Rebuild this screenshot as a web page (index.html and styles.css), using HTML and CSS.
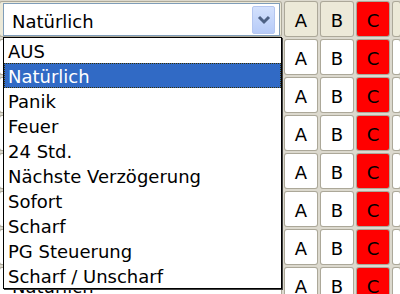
FILE: index.html
```html
<!DOCTYPE html>
<html>
<head>
<meta charset="UTF-8">
<title>Alarmzonen</title>
<link rel="stylesheet" href="styles.css">
</head>
<body>

<div class="grid">
	<div class="cell head name">
		<div class="combo">
			<span class="combo-text">Natürlich</span>
			<span class="combo-btn">
				<svg width="14" height="10" viewBox="0 0 14 10"><polyline points="2,2 7,7 12,2" fill="none" stroke="#4d6185" stroke-width="3"/></svg>
			</span>
		</div>
	</div>
	<div class="cell head">A</div>
	<div class="cell head">B</div>
	<div class="cell red">C</div>
	<div class="cell head"></div>

	<!-- first column of these rows is covered by the open list -->
	<div class="cell name"></div><div class="cell">A</div><div class="cell">B</div><div class="cell red">C</div><div class="cell"></div>
	<div class="cell name"></div><div class="cell">A</div><div class="cell">B</div><div class="cell red">C</div><div class="cell"></div>
	<div class="cell name"></div><div class="cell">A</div><div class="cell">B</div><div class="cell red">C</div><div class="cell"></div>
	<div class="cell name"></div><div class="cell">A</div><div class="cell">B</div><div class="cell red">C</div><div class="cell"></div>
	<div class="cell name"></div><div class="cell">A</div><div class="cell">B</div><div class="cell red">C</div><div class="cell"></div>
	<div class="cell name"></div><div class="cell">A</div><div class="cell">B</div><div class="cell red">C</div><div class="cell"></div>
	<div class="cell name">Natürlich</div><div class="cell">A</div><div class="cell">B</div><div class="cell red">C</div><div class="cell"></div>
</div><!-- grid -->

<ul class="dropdown">
	<li>AUS</li>
	<li class="selected">Natürlich</li>
	<li>Panik</li>
	<li>Feuer</li>
	<li>24 Std.</li>
	<li>Nächste Verzögerung</li>
	<li>Sofort</li>
	<li>Scharf</li>
	<li>PG Steuerung</li>
	<li>Scharf / Unscharf</li>
</ul>

</body>
</html>
```

FILE: styles.css
```css
html, body {
	margin: 0;
	padding: 0;
	overflow: hidden;
	background: #fff;
	font: 18px "DejaVu Sans", sans-serif;
	color: #000;
}

.grid {
	display: grid;
	grid-template-columns: 281px 32px 32px 32px 1fr;
	grid-auto-rows: 34px;
	gap: 4px;
	padding-top: 2px;
	background: #dcd9ce;
	height: 294px;
	overflow: hidden;
}

.cell {
	background: #fff;
	box-shadow: 0 0 0 1px #aca899;
	border-radius: 2px;
	text-align: center;
	line-height: 34px;
	padding-top: 2px;
	box-sizing: border-box;
	color: #000;
}

.cell.head {
	background: #ece9d8;
}

.cell.red {
	background: #ff0000;
}

.cell.name {
	text-align: left;
	padding-left: 12px;
}

.cell.head.name {
	padding: 1px 1px 0 3px;
	line-height: normal;
}

.combo {
	display: flex;
	align-items: center;
	height: 33px;
	box-sizing: border-box;
	border: 1px solid #7f9db9;
	background: #fff;
}

.combo-text {
	flex: 1;
	padding-left: 8px;
	padding-top: 3px;
}

.combo-btn {
	display: flex;
	align-items: center;
	justify-content: center;
	width: 23px;
	height: 28px;
	margin-right: 4px;
	box-sizing: border-box;
	border: 1px solid #b4c6f0;
	border-radius: 2px;
	background: linear-gradient(#d3e1fd, #b7cbf8);
}

.dropdown {
	position: absolute;
	left: 3px;
	top: 37px;
	width: 277px;
	margin: 0;
	padding: 0;
	list-style-type: none;
	background: #fff;
	border: 1px solid #000;
	box-shadow: 1px 1px 0 #404040;
}

.dropdown li {
	height: 25px;
	line-height: 27px;
	padding-left: 4px;
	white-space: nowrap;
}

.dropdown li.selected {
	background: #316ac5;
	color: #fff;
	outline: 1px dotted #3a3000;
	outline-offset: -1px;
}
```
